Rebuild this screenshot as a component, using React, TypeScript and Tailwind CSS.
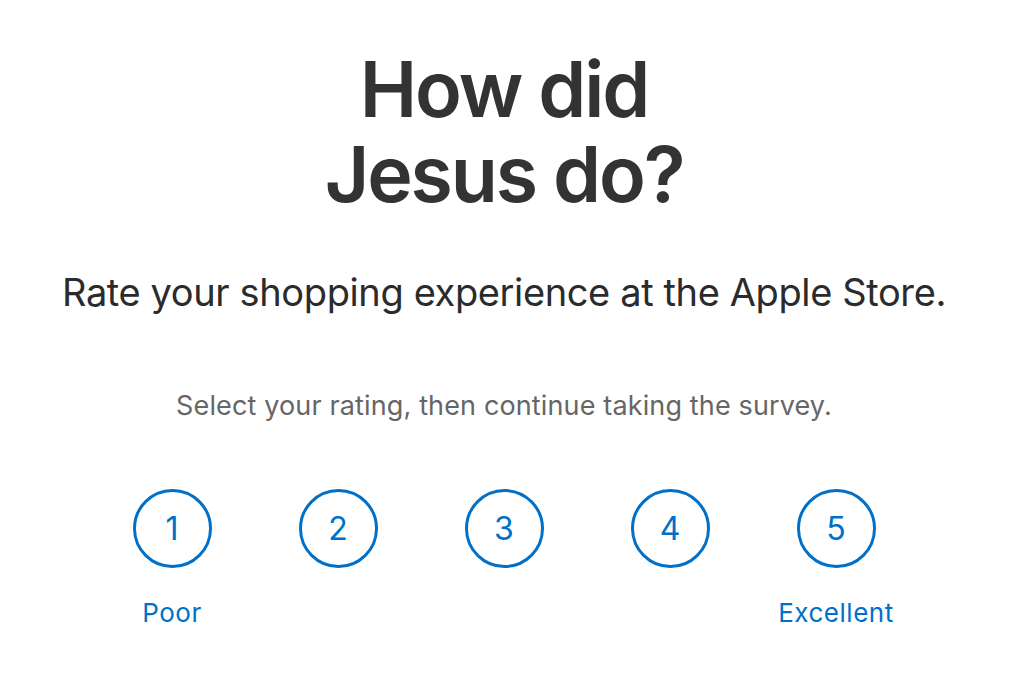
import React from 'react';

const ratings = [1, 2, 3, 4, 5];

const labels: Record<number, string> = {
  1: 'Poor',
  5: 'Excellent',
};

export default function App() {
  return (
    <main
      className="min-h-[690px] w-full bg-white pr-[26px] text-center"
      style={{ fontFamily: 'Inter, "Noto Sans", sans-serif' }}
    >
      <div className="flex flex-col items-center pt-[47px]">
        <h1 className="text-[77px] leading-[85px] font-semibold tracking-[-0.028em] text-[#333336]">
          How did
          <br />
          Jesus do?
        </h1>

        <p className="mt-[51px] text-[38px] leading-[48px] font-normal tracking-[-0.01em] text-[#2b2b2d]">
          Rate your shopping experience at the Apple Store.
        </p>

        <p className="mt-[74px] text-[27px] leading-[32px] tracking-[0.005em] text-[#666]">
          Select your rating, then continue taking the survey.
        </p>

        <div className="mt-[67px] flex">
          {ratings.map((n) => (
            <div key={n} className="flex w-[166px] flex-col items-center">
              <button className="flex h-[79px] w-[79px] items-center justify-center rounded-full border-[3px] border-[#0070c9] text-[32px] font-normal text-[#0070c9]">
                {n}
              </button>
              <span className="mt-[30px] h-[30px] text-[26px] leading-[30px] tracking-[0.02em] text-[#0070c9]">
                {labels[n] ?? ''}
              </span>
            </div>
          ))}
        </div>
      </div>
    </main>
  );
}
